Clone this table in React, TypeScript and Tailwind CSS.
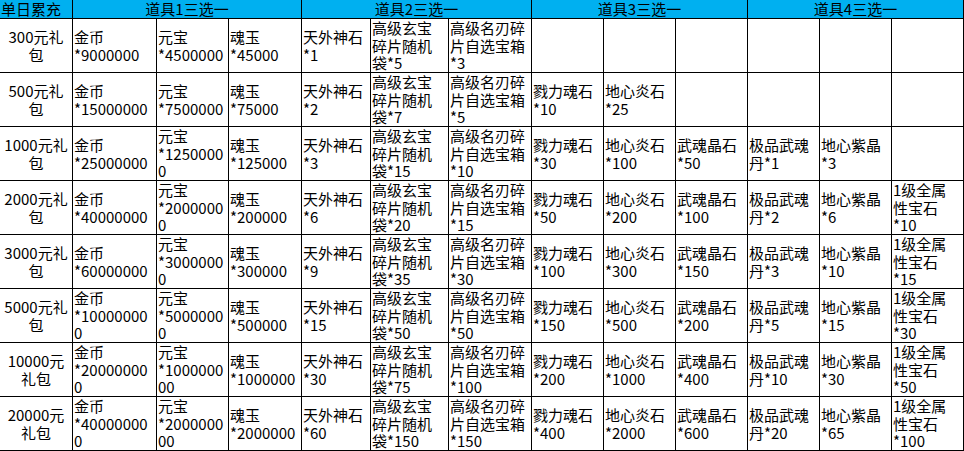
import React from "react";

type Row = string[][];

const rows: Row[] = [
  [["300元礼", "包"], ["金币", "*9000000"], ["元宝", "*4500000"], ["魂玉", "*45000"], ["天外神石", "*1"], ["高级玄宝", "碎片随机", "袋*5"], ["高级名刃碎", "片自选宝箱", "*3"], [], [], [], [], [], []],
  [["500元礼", "包"], ["金币", "*15000000"], ["元宝", "*7500000"], ["魂玉", "*75000"], ["天外神石", "*2"], ["高级玄宝", "碎片随机", "袋*7"], ["高级名刃碎", "片自选宝箱", "*5"], ["戮力魂石", "*10"], ["地心炎石", "*25"], [], [], [], []],
  [["1000元礼", "包"], ["金币", "*25000000"], ["元宝", "*1250000", "0"], ["魂玉", "*125000"], ["天外神石", "*3"], ["高级玄宝", "碎片随机", "袋*15"], ["高级名刃碎", "片自选宝箱", "*10"], ["戮力魂石", "*30"], ["地心炎石", "*100"], ["武魂晶石", "*50"], ["极品武魂", "丹*1"], ["地心紫晶", "*3"], []],
  [["2000元礼", "包"], ["金币", "*40000000"], ["元宝", "*2000000", "0"], ["魂玉", "*200000"], ["天外神石", "*6"], ["高级玄宝", "碎片随机", "袋*20"], ["高级名刃碎", "片自选宝箱", "*15"], ["戮力魂石", "*50"], ["地心炎石", "*200"], ["武魂晶石", "*100"], ["极品武魂", "丹*2"], ["地心紫晶", "*6"], ["1级全属", "性宝石", "*10"]],
  [["3000元礼", "包"], ["金币", "*60000000"], ["元宝", "*3000000", "0"], ["魂玉", "*300000"], ["天外神石", "*9"], ["高级玄宝", "碎片随机", "袋*35"], ["高级名刃碎", "片自选宝箱", "*30"], ["戮力魂石", "*100"], ["地心炎石", "*300"], ["武魂晶石", "*150"], ["极品武魂", "丹*3"], ["地心紫晶", "*10"], ["1级全属", "性宝石", "*15"]],
  [["5000元礼", "包"], ["金币", "*10000000", "0"], ["元宝", "*5000000", "0"], ["魂玉", "*500000"], ["天外神石", "*15"], ["高级玄宝", "碎片随机", "袋*50"], ["高级名刃碎", "片自选宝箱", "*50"], ["戮力魂石", "*150"], ["地心炎石", "*500"], ["武魂晶石", "*200"], ["极品武魂", "丹*5"], ["地心紫晶", "*15"], ["1级全属", "性宝石", "*30"]],
  [["10000元", "礼包"], ["金币", "*20000000", "0"], ["元宝", "*1000000", "00"], ["魂玉", "*1000000"], ["天外神石", "*30"], ["高级玄宝", "碎片随机", "袋*75"], ["高级名刃碎", "片自选宝箱", "*100"], ["戮力魂石", "*200"], ["地心炎石", "*1000"], ["武魂晶石", "*400"], ["极品武魂", "丹*10"], ["地心紫晶", "*30"], ["1级全属", "性宝石", "*50"]],
  [["20000元", "礼包"], ["金币", "*40000000", "0"], ["元宝", "*2000000", "00"], ["魂玉", "*2000000"], ["天外神石", "*60"], ["高级玄宝", "碎片随机", "袋*150"], ["高级名刃碎", "片自选宝箱", "*150"], ["戮力魂石", "*400"], ["地心炎石", "*2000"], ["武魂晶石", "*600"], ["极品武魂", "丹*20"], ["地心紫晶", "*65"], ["1级全属", "性宝石", "*100"]],
];

export default function App() {
  return (
    <div
      className="w-[964px] h-[451px] bg-black text-black text-[15px] leading-[17.6px]"
      style={{ fontFamily: '"Noto Sans CJK SC", "Noto Sans", sans-serif' }}
    >
      <div className="grid grid-cols-[72px_83px_71px_72px_68px_77px_82px_71px_71px_71px_71px_71px_71px] grid-rows-[18px_repeat(8,53px)] gap-px pr-px pb-px">
        <div className="bg-[#00b0f0] pl-px whitespace-nowrap leading-[18px]">单日累充</div>
        <div className="col-span-3 bg-[#00b0f0] text-center whitespace-nowrap leading-[18px]">道具1三选一</div>
        <div className="col-span-3 bg-[#00b0f0] text-center whitespace-nowrap leading-[18px]">道具2三选一</div>
        <div className="col-span-3 bg-[#00b0f0] text-center whitespace-nowrap leading-[18px]">道具3三选一</div>
        <div className="col-span-3 bg-[#00b0f0] text-center whitespace-nowrap leading-[18px]">道具4三选一</div>
        {rows.map((row, ri) =>
          row.map((cell, ci) => (
            <div
              key={`${ri}-${ci}`}
              className={
                ci === 0
                  ? "bg-white flex flex-col justify-center items-center whitespace-nowrap"
                  : "bg-white flex flex-col justify-center pl-px whitespace-nowrap"
              }
            >
              {cell.map((line, li) => (
                <div key={li}>{line}</div>
              ))}
            </div>
          ))
        )}
      </div>
    </div>
  );
}
